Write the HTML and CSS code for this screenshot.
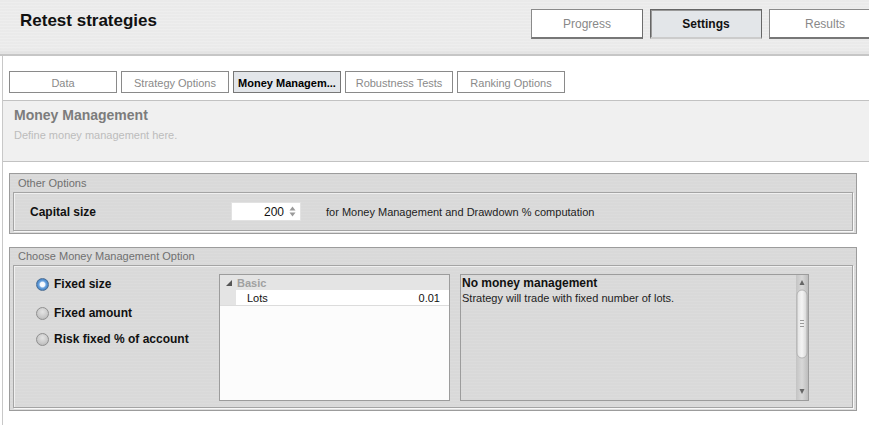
FILE: index.html
```html
<!DOCTYPE html>
<html>
<head>
<meta charset="utf-8">
<title>Retest strategies</title>
<link rel="stylesheet" href="styles.css">
</head>
<body>
<div class="header">
  <div class="title">Retest strategies</div>
  <div class="topnav">
    <div class="tbtn">Progress</div>
    <div class="tbtn active">Settings</div>
    <div class="tbtn">Results</div>
  </div>
</div>
<div class="main">
  <div class="tabs">
    <div class="tab">Data</div>
    <div class="tab">Strategy Options</div>
    <div class="tab active">Money Managem...</div>
    <div class="tab">Robustness Tests</div>
    <div class="tab">Ranking Options</div>
  </div>
  <div class="intro">
    <div class="intro-title">Money Management</div>
    <div class="intro-sub">Define money management here.</div>
  </div>

  <div class="panel">
    <div class="legend">Other Options</div>
    <div class="inner inner-opts">
      <div class="cap-label">Capital size</div>
      <div class="spin">
        <span class="spin-val">200</span>
        <svg class="spin-arrows" width="7" height="11" viewBox="0 0 7 11">
          <path d="M3.5 0.5 L6.5 4.5 L0.5 4.5 Z" fill="#9a9a9a"/>
          <path d="M3.5 10.5 L6.5 6.5 L0.5 6.5 Z" fill="#9a9a9a"/>
        </svg>
      </div>
      <div class="cap-note">for Money Management and Drawdown % computation</div>
    </div>
  </div>

  <div class="panel panel2">
    <div class="legend">Choose Money Management Option</div>
    <div class="inner inner-mm">
      <div class="radios">
        <div class="radio-row"><span class="radio checked"></span><span>Fixed size</span></div>
        <div class="radio-row r2"><span class="radio"></span><span>Fixed amount</span></div>
        <div class="radio-row r3"><span class="radio"></span><span>Risk fixed % of account</span></div>
      </div>
      <div class="grid">
        <div class="grid-group">
          <svg class="tri" width="6" height="6" viewBox="0 0 6 6"><path d="M6 0 L6 6 L0 6 Z" fill="#555"/></svg>
          <span>Basic</span>
        </div>
        <div class="grid-row">
          <div class="gutter"></div>
          <div class="cell">
            <span>Lots</span>
            <span>0.01</span>
          </div>
        </div>
      </div>
      <div class="desc">
        <div class="desc-text">
          <div class="desc-title">No money management</div>
          <div class="desc-body">Strategy will trade with fixed number of lots.</div>
        </div>
        <div class="scrollbar">
          <svg width="12" height="125" viewBox="0 0 12 125">
            <defs>
              <linearGradient id="trk" x1="0" y1="0" x2="1" y2="0">
                <stop offset="0" stop-color="#c4c4c4"/>
                <stop offset="0.5" stop-color="#d8d8d8"/>
                <stop offset="1" stop-color="#bdbdbd"/>
              </linearGradient>
              <linearGradient id="thm" x1="0" y1="0" x2="1" y2="0">
                <stop offset="0" stop-color="#e2e2e2"/>
                <stop offset="0.5" stop-color="#f4f4f4"/>
                <stop offset="1" stop-color="#d4d4d4"/>
              </linearGradient>
            </defs>
            <rect x="0" y="0" width="12" height="125" fill="url(#trk)"/>
            <path d="M6 5 L8.5 10 L3.5 10 Z" fill="#666"/>
            <rect x="1" y="15" width="10" height="68" rx="5" fill="url(#thm)" stroke="#a8a8a8" stroke-width="0.8"/>
            <path d="M4 45.5 H8 M4 48.5 H8 M4 51.5 H8" stroke="#999" stroke-width="1"/>
            <path d="M6 119 L8.5 114 L3.5 114 Z" fill="#666"/>
          </svg>
        </div>
      </div>
    </div>
  </div>
</div>
</body>
</html>
```
FILE: styles.css
```css
* { box-sizing: border-box; }
html, body {
  margin: 0;
  padding: 0;
}
body {
  width: 869px;
  height: 425px;
  overflow: hidden;
  background: #ffffff;
  font-family: "Liberation Sans", Arial, sans-serif;
  color: #222;
}

.header {
  height: 56px;
  display: flex;
  align-items: flex-start;
  background-color: #ececec;
  background-image: repeating-linear-gradient(0deg, rgba(255,255,255,0.12) 0px, rgba(255,255,255,0.12) 1px, rgba(0,0,0,0.008) 1px, rgba(0,0,0,0.008) 3px);
  border-bottom: 2px solid #c6c6c6;
  box-shadow: inset 0 -5px 4px -3px rgba(0,0,0,0.05);
  overflow: hidden;
}
.title {
  flex: 0 0 531px;
  padding: 11px 0 0 20px;
  font-size: 17px;
  font-weight: bold;
  line-height: 20px;
  color: #111;
}
.topnav {
  display: flex;
  gap: 7px;
  margin-top: 9px;
  flex: 0 0 auto;
}
.tbtn {
  width: 112px;
  height: 30px;
  background: #ffffff;
  border: 1px solid #8a8a8a;
  border-right-color: #6e6e6e;
  border-bottom: 2px solid #777;
  font-size: 12px;
  color: #888;
  display: flex;
  align-items: center;
  justify-content: center;
}
.tbtn.active {
  background: #e3e6e9;
  color: #111;
  font-weight: bold;
  border-color: #666;
  border-bottom: 2px solid #ccc;
  box-shadow: inset 1px 1px 0 #999;
}

.main {
  margin-left: 2px;
  border-left: 1px solid #c8c8c8;
  height: 369px;
  padding-top: 15px;
}
.tabs {
  display: flex;
  gap: 4px;
  padding-left: 6px;
}
.tab {
  width: 108px;
  height: 22px;
  border: 1px solid #8a8a8a;
  background: #ffffff;
  font-size: 11px;
  color: #8a8a8a;
  display: flex;
  align-items: center;
  justify-content: center;
  padding-top: 1px;
}
.tab.active {
  background: #e3e6ea;
  color: #000;
  font-weight: bold;
  border-color: #777;
}

.intro {
  margin-top: 7px;
  height: 62px;
  background: #f0f0f0;
  border-top: 1px solid #c2c2c2;
  border-bottom: 1px solid #c2c2c2;
  padding: 6px 0 0 11px;
}
.intro-title {
  font-size: 14px;
  font-weight: bold;
  line-height: 17px;
  color: #7c7c7c;
}
.intro-sub {
  margin-top: 4px;
  font-size: 11px;
  line-height: 14px;
  color: #bcbcbc;
}

.panel {
  margin: 11px 12px 0 6px;
  border: 1px solid #9c9c9c;
  background-color: #d9d9d9;
  background-image: repeating-linear-gradient(0deg, rgba(255,255,255,0.07) 0px, rgba(255,255,255,0.07) 1px, transparent 1px, transparent 3px);
  padding-bottom: 2px;
}
.panel2 {
  margin-top: 13px;
}
.legend {
  height: 18px;
  line-height: 18px;
  padding-left: 8px;
  font-size: 11px;
  color: #707070;
}
.panel2 .legend {
  height: 17px;
  line-height: 17px;
}
.inner {
  margin: 0 3px;
  border: 1px solid #a4a4a4;
  box-shadow: 1px 1px 0 #f8f8f8, inset 1px 1px 0 #f0f0f0;
}
.inner-opts {
  height: 39px;
  display: flex;
  align-items: center;
  padding-left: 16px;
}
.cap-label {
  width: 201px;
  font-size: 12px;
  font-weight: bold;
  color: #111;
}
.spin {
  width: 70px;
  height: 19px;
  background: #fff;
  border: 1px solid #e2e2e2;
  display: flex;
  align-items: center;
  justify-content: flex-end;
  padding-right: 4px;
  gap: 5px;
  font-size: 12px;
  color: #111;
}
.spin-arrows { display: block; }
.cap-note {
  margin-left: 25px;
  font-size: 11px;
  color: #222;
}

.inner-mm {
  height: 143px;
  display: flex;
  align-items: flex-start;
  padding-top: 8px;
}
.radios {
  width: 205px;
  padding-left: 22px;
  display: flex;
  flex-direction: column;
}
.radio-row {
  height: 20px;
  display: flex;
  align-items: center;
  gap: 5px;
  font-size: 12px;
  font-weight: bold;
  color: #111;
}
.radio-row.r2 { margin-top: 9px; }
.radio-row.r3 { margin-top: 6px; }
.radio {
  width: 13px;
  height: 13px;
  border-radius: 50%;
  border: 1px solid #8f8f8f;
  background: radial-gradient(circle at 50% 35%, #e4e4e4 0%, #c8c8c8 60%, #b0b0b0 100%);
  flex: 0 0 13px;
}
.radio.checked {
  border-color: #4d6f94;
  background: radial-gradient(circle at 50% 50%, #ffffff 0%, #f2f8ff 30%, #6fa6e0 45%, #3d7fc4 75%, #5d89b8 100%);
}

.grid {
  width: 231px;
  height: 127px;
  border: 1px solid #9c9c9c;
  background: #fcfcfc;
  flex: 0 0 231px;
}
.grid-group {
  height: 15px;
  background: #e4e4e4;
  display: flex;
  align-items: center;
  padding-left: 6px;
  gap: 5px;
  font-size: 11px;
  font-weight: bold;
  color: #a0a0a0;
}
.tri { display: block; }
.grid-row {
  display: flex;
  height: 16px;
  border-bottom: 1px solid #dcdcdc;
}
.gutter {
  width: 16px;
  background: #e4e4e4;
}
.cell {
  flex: 1;
  background: #fff;
  display: flex;
  align-items: center;
  justify-content: space-between;
  padding: 0 9px 0 11px;
  font-size: 11px;
  color: #111;
}

.desc {
  margin-left: 10px;
  width: 349px;
  height: 127px;
  border: 1px solid #9c9c9c;
  display: flex;
  flex: 0 0 349px;
}
.desc-text {
  flex: 1;
  padding: 1px 0 0 1px;
}
.desc-title {
  font-size: 12px;
  font-weight: bold;
  line-height: 15px;
  color: #111;
}
.desc-body {
  font-size: 11px;
  line-height: 15px;
  color: #222;
}
.scrollbar {
  width: 12px;
  height: 125px;
  flex: 0 0 12px;
}
.scrollbar svg { display: block; }
```
